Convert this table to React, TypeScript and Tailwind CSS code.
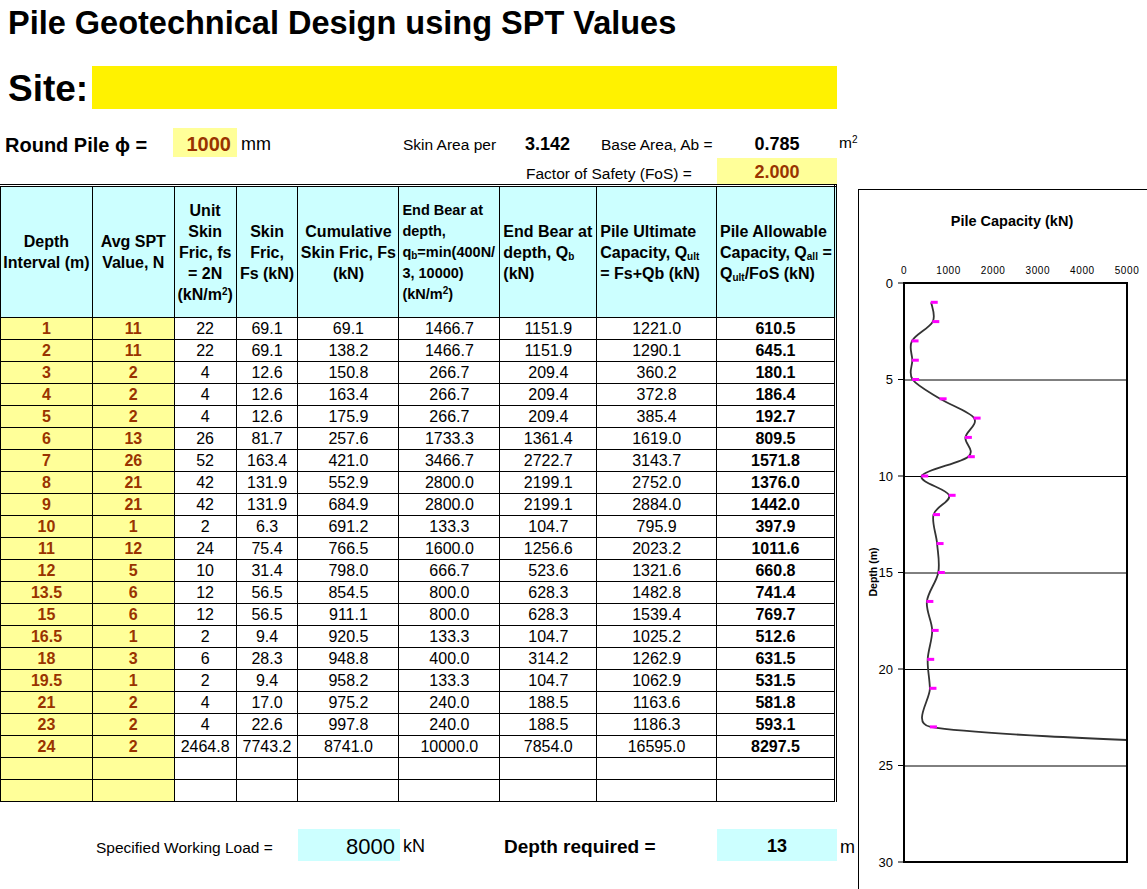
import React from "react";

const rows: string[][] = [
  ["1", "11", "22", "69.1", "69.1", "1466.7", "1151.9", "1221.0", "610.5"],
  ["2", "11", "22", "69.1", "138.2", "1466.7", "1151.9", "1290.1", "645.1"],
  ["3", "2", "4", "12.6", "150.8", "266.7", "209.4", "360.2", "180.1"],
  ["4", "2", "4", "12.6", "163.4", "266.7", "209.4", "372.8", "186.4"],
  ["5", "2", "4", "12.6", "175.9", "266.7", "209.4", "385.4", "192.7"],
  ["6", "13", "26", "81.7", "257.6", "1733.3", "1361.4", "1619.0", "809.5"],
  ["7", "26", "52", "163.4", "421.0", "3466.7", "2722.7", "3143.7", "1571.8"],
  ["8", "21", "42", "131.9", "552.9", "2800.0", "2199.1", "2752.0", "1376.0"],
  ["9", "21", "42", "131.9", "684.9", "2800.0", "2199.1", "2884.0", "1442.0"],
  ["10", "1", "2", "6.3", "691.2", "133.3", "104.7", "795.9", "397.9"],
  ["11", "12", "24", "75.4", "766.5", "1600.0", "1256.6", "2023.2", "1011.6"],
  ["12", "5", "10", "31.4", "798.0", "666.7", "523.6", "1321.6", "660.8"],
  ["13.5", "6", "12", "56.5", "854.5", "800.0", "628.3", "1482.8", "741.4"],
  ["15", "6", "12", "56.5", "911.1", "800.0", "628.3", "1539.4", "769.7"],
  ["16.5", "1", "2", "9.4", "920.5", "133.3", "104.7", "1025.2", "512.6"],
  ["18", "3", "6", "28.3", "948.8", "400.0", "314.2", "1262.9", "631.5"],
  ["19.5", "1", "2", "9.4", "958.2", "133.3", "104.7", "1062.9", "531.5"],
  ["21", "2", "4", "17.0", "975.2", "240.0", "188.5", "1163.6", "581.8"],
  ["23", "2", "4", "22.6", "997.8", "240.0", "188.5", "1186.3", "593.1"],
  ["24", "2", "2464.8", "7743.2", "8741.0", "10000.0", "7854.0", "16595.0", "8297.5"],
  ["", "", "", "", "", "", "", "", ""],
  ["", "", "", "", "", "", "", "", ""],
];

const colWidths = [92, 82, 62, 62, 101, 101, 97, 120, 119];

// chart geometry (svg coords, origin at panel inner corner)
const X0 = 45, X1 = 268, Y0 = 93, Y1 = 672;
const px = (v: number) => X0 + (v * (X1 - X0)) / 5000;
const py = (d: number) => Y0 + (d * (Y1 - Y0)) / 30;

type Pt = [number, number];

// excel-like smoothed line: catmull-rom with tangent clamped to half the segment
function smoothPath(pts: Pt[]) {
  const dist = (a: Pt, b: Pt) => Math.hypot(a[0] - b[0], a[1] - b[1]);
  let d = `M${pts[0][0].toFixed(1)},${pts[0][1].toFixed(1)}`;
  for (let i = 0; i < pts.length - 1; i++) {
    const p0 = pts[i - 1] ?? pts[i];
    const p1 = pts[i];
    const p2 = pts[i + 1];
    const p3 = pts[i + 2] ?? p2;
    const seg = dist(p1, p2);
    const t1 = dist(p0, p2);
    const t2 = dist(p1, p3);
    const f1 = t1 > 0 ? Math.min(1 / 6, seg / (2 * t1)) : 0;
    const f2 = t2 > 0 ? Math.min(1 / 6, seg / (2 * t2)) : 0;
    const c1: Pt = [p1[0] + (p2[0] - p0[0]) * f1, p1[1] + (p2[1] - p0[1]) * f1];
    const c2: Pt = [p2[0] - (p3[0] - p1[0]) * f2, p2[1] - (p3[1] - p1[1]) * f2];
    d += ` C${c1[0].toFixed(1)},${c1[1].toFixed(1)} ${c2[0].toFixed(1)},${c2[1].toFixed(1)} ${p2[0].toFixed(1)},${p2[1].toFixed(1)}`;
  }
  return d;
}

function CapacityChart() {
  const pts: Pt[] = rows
    .filter((r) => r[0] !== "")
    .map((r) => [px(parseFloat(r[8])), py(parseFloat(r[0]))]);
  const depths = [0, 5, 10, 15, 20, 25, 30];
  const caps = [0, 1000, 2000, 3000, 4000, 5000];
  return (
    <svg width="300" height="710" className="block">
      <defs>
        <clipPath id="plot">
          <rect x={X0} y={Y0} width={X1 - X0} height={Y1 - Y0} />
        </clipPath>
      </defs>
      <text x="153" y="36" textAnchor="middle" fontSize="14.5" fontWeight="bold" fontFamily="Liberation Sans, Arial, sans-serif">
        Pile Capacity (kN)
      </text>
      {caps.map((c) => (
        <text key={c} x={px(c)} y="84" textAnchor="middle" fontSize="10" letterSpacing="0.6" fontFamily="Liberation Sans, Arial, sans-serif">
          {c}
        </text>
      ))}
      {depths.map((d) => (
        <g key={d}>
          <text x="34" y={py(d) + 4.5} textAnchor="end" fontSize="13" fontFamily="Liberation Sans, Arial, sans-serif">
            {d}
          </text>
          <line x1={X0 - 6} x2={X0} y1={py(d)} y2={py(d)} stroke="#000" strokeWidth="1" />
          {d > 0 && d < 30 && <line x1={X0} x2={X1} y1={py(d) + 0.5} y2={py(d) + 0.5} stroke="#000" strokeWidth="1" />}
        </g>
      ))}
      <text
        transform="translate(18 382) rotate(-90)"
        textAnchor="middle"
        fontSize="10.5"
        fontWeight="bold"
        fontFamily="Liberation Sans, Arial, sans-serif"
      >
        Depth (m)
      </text>
      <g clipPath="url(#plot)">
        <path d={smoothPath(pts)} fill="none" stroke="#333" strokeWidth="1.8" />
        {pts.map((p, i) => (
          <rect key={i} x={p[0] - 0.5} y={p[1] - 1.5} width="7" height="3" fill="#ff00ff" />
        ))}
      </g>
      <rect x={X0} y={Y0} width={X1 - X0} height={Y1 - Y0} fill="none" stroke="#000" strokeWidth="2" />
    </svg>
  );
}

function HeaderCell({ children, left }: { children: React.ReactNode; left?: boolean }) {
  return (
    <th
      className={`border border-black bg-[#ccffff] p-0 align-middle font-bold leading-[21px] whitespace-nowrap ${
        left ? "text-left pl-[3px]" : "text-center"
      }`}
    >
      {children}
    </th>
  );
}

export default function App() {
  return (
    <div className="w-[1147px] h-[889px] overflow-hidden bg-white text-black font-['Liberation_Sans',Arial,sans-serif]">
      <div className="h-[66px] pl-[8px] pt-[5px] text-[32.5px] font-bold leading-[36px] whitespace-nowrap">
        Pile Geotechnical Design using SPT Values
      </div>

      <div className="flex h-[43px] items-center">
        <div className="w-[92px] shrink-0 pl-[8px] pt-[2px] text-[37px] font-bold leading-none">Site:</div>
        <div className="h-full w-[745px] shrink-0 bg-[#fff200]" />
      </div>

      <div className="mt-[19px] flex h-[29px] items-center whitespace-nowrap">
        <div className="w-[173px] shrink-0 pl-[5px] pt-[4px] text-[20px] font-bold">Round Pile ϕ =</div>
        <div className="flex h-full w-[64px] shrink-0 items-center justify-end bg-[#ffff99] pr-[6px] pt-[3px] text-[20px] font-bold text-[#993300]">
          1000
        </div>
        <div className="w-[166px] shrink-0 pl-[4px] pt-[4px] text-[18px]">mm</div>
        <div className="w-[122px] shrink-0 pt-[5px] text-[15.5px]">Skin Area per</div>
        <div className="w-[76px] shrink-0 pt-[4px] text-[18px] font-bold">3.142</div>
        <div className="w-[116px] shrink-0 pt-[5px] text-[15.5px]">Base Area, Ab =</div>
        <div className="w-[120px] shrink-0 pt-[4px] text-center text-[18px] font-bold">0.785</div>
        <div className="pl-[2px] text-[15.5px]">
          m<sup className="text-[10px]">2</sup>
        </div>
      </div>

      <div className="mt-[1px] flex h-[26px] items-center whitespace-nowrap">
        <div className="w-[526px] shrink-0" />
        <div className="w-[191px] shrink-0 pt-[6px] text-[15.5px]">Factor of Safety (FoS) =</div>
        <div className="flex h-full w-[120px] shrink-0 items-center justify-center bg-[#ffff99] pt-[3px] text-[18px] font-bold text-[#993300]">
          2.000
        </div>
      </div>

      <div className="flex items-start">
        <div className="w-[837px] shrink-0">
          <table className="table-fixed border-collapse border-t-[3px] border-r-[3px] border-double border-black">
            <colgroup>
              {colWidths.map((w, i) => (
                <col key={i} style={{ width: w }} />
              ))}
            </colgroup>
            <thead>
              <tr className="h-[132px] text-[16px]">
                <HeaderCell>
                  Depth
                  <br />
                  Interval (m)
                </HeaderCell>
                <HeaderCell>
                  Avg SPT
                  <br />
                  Value, N
                </HeaderCell>
                <HeaderCell>
                  Unit
                  <br />
                  Skin
                  <br />
                  Fric, fs
                  <br />= 2N
                  <br />
                  (kN/m<sup className="text-[10px]">2</sup>)
                </HeaderCell>
                <HeaderCell>
                  Skin
                  <br />
                  Fric,
                  <br />
                  Fs (kN)
                </HeaderCell>
                <HeaderCell>
                  Cumulative
                  <br />
                  Skin Fric, Fs
                  <br />
                  (kN)
                </HeaderCell>
                <th className="border border-black bg-[#ccffff] p-0 pl-[3px] text-left align-middle text-[14.5px] font-bold leading-[21px] whitespace-nowrap">
                  End Bear at
                  <br />
                  depth,
                  <br />q<sub className="text-[10px]">b</sub>=min(400N/
                  <br />
                  3, 10000)
                  <br />
                  (kN/m<sup className="text-[10px]">2</sup>)
                </th>
                <HeaderCell left>
                  End Bear at
                  <br />
                  depth, Q<sub className="text-[10px]">b</sub>
                  <br />
                  (kN)
                </HeaderCell>
                <HeaderCell left>
                  Pile Ultimate
                  <br />
                  Capacity, Q<sub className="text-[10px]">ult</sub>
                  <br />= Fs+Qb (kN)
                </HeaderCell>
                <HeaderCell left>
                  Pile Allowable
                  <br />
                  Capacity, Q<sub className="text-[10px]">all</sub> =
                  <br />Q<sub className="text-[10px]">ult</sub>/FoS (kN)
                </HeaderCell>
              </tr>
            </thead>
            <tbody>
              {rows.map((r, i) => (
                <tr key={i} className="h-[22px] text-[16px] leading-[20px]">
                  {r.map((v, j) => (
                    <td
                      key={j}
                      className={`border border-black p-0 pt-[1px] text-center ${
                        j < 2 ? "bg-[#ffff99] font-bold text-[#993300]" : j === 8 ? "font-bold" : ""
                      }`}
                    >
                      {v}
                    </td>
                  ))}
                </tr>
              ))}
            </tbody>
          </table>

          <div className="mt-[27px] flex h-[32px] items-center whitespace-nowrap">
            <div className="w-[298px] shrink-0 pl-[96px] pt-[6px] text-[15.5px]">Specified Working Load =</div>
            <div className="flex h-full w-[102px] shrink-0 items-center justify-end bg-[#ccffff] pr-[5px] pt-[2px] text-[22px]">
              8000
            </div>
            <div className="w-[104px] shrink-0 pl-[3px] pt-[3px] text-[18px]">kN</div>
            <div className="w-[213px] shrink-0 pt-[4px] text-[19px] font-bold">Depth required =</div>
            <div className="flex h-full w-[120px] shrink-0 items-center justify-center bg-[#ccffff] pt-[3px] text-[18px] font-bold">
              13
            </div>
            <div className="pl-[3px] pt-[4px] text-[18px]">m</div>
          </div>
        </div>

        <div className="ml-[21px] mt-[5px] h-[710px] w-[300px] shrink-0 border-l border-t border-black">
          <CapacityChart />
        </div>
      </div>
    </div>
  );
}
